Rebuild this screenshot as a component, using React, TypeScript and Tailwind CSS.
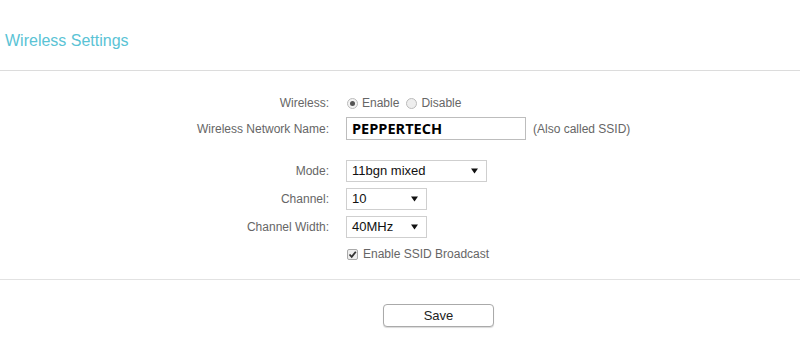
import React from "react";

const Arrow = () => (
  <svg width="7" height="6" viewBox="0 0 7 6" className="shrink-0">
    <path d="M0 0.5 L7 0.5 L3.5 5.5 Z" fill="#111" />
  </svg>
);

function Select({ value, width }: { value: string; width: string }) {
  return (
    <div
      className={`${width} h-[22px] border border-[#cfcfcf] bg-white flex items-center justify-between pl-[5px] pr-[8px] text-[13px] text-[#111]`}
    >
      <span>{value}</span>
      <Arrow />
    </div>
  );
}

function Row({ label, h, children, mt }: { label: string; h: string; children: React.ReactNode; mt: string }) {
  return (
    <div className={`flex items-center ${h} ${mt}`}>
      <div className="w-[329px] text-right text-[12px] text-[#666] pr-0">{label}</div>
      <div className="ml-[17px] flex items-center">{children}</div>
    </div>
  );
}

export default function App() {
  return (
    <div
      className="w-[800px] h-[351px] bg-white overflow-hidden"
      style={{ fontFamily: '"Liberation Sans", Arial, sans-serif' }}
    >
      <div className="h-[71px] border-b border-[#dcdcdc] pl-[5px] pt-[31px]">
        <div className="text-[16px] leading-[20px] text-[#5ac3d5]">Wireless Settings</div>
      </div>
      <div className="h-[209px] border-b border-[#e2e2e2] pt-[21px]">
        <Row label="Wireless:" h="h-[22px]" mt="mt-0">
          <div className="flex items-center text-[12px] text-[#666]">
            <span className="w-[11px] h-[11px] rounded-full border border-[#bbb] bg-[#f3f3f3] flex items-center justify-center ml-[1px]">
              <span className="w-[5px] h-[5px] rounded-full bg-[#555]" />
            </span>
            <span className="ml-[4px]">Enable</span>
            <span className="w-[11px] h-[11px] rounded-full border border-[#bbb] bg-[#eee] ml-[7px]" />
            <span className="ml-[4px]">Disable</span>
          </div>
        </Row>
        <Row label="Wireless Network Name:" h="h-[23px]" mt="mt-[3px]">
          <div className="w-[180px] h-[23px] border border-[#bdbdbd] bg-white flex items-center pl-[5px]">
            <span
              className="text-[14.5px] font-bold text-black"
              style={{ fontFamily: '"Open Sans", sans-serif' }}
            >
              PEPPERTECH
            </span>
          </div>
          <span className="ml-[7px] text-[12px] text-[#666]">(Also called SSID)</span>
        </Row>
        <Row label="Mode:" h="h-[22px]" mt="mt-[20px]">
          <Select value="11bgn mixed" width="w-[141px]" />
        </Row>
        <Row label="Channel:" h="h-[22px]" mt="mt-[6px]">
          <Select value="10" width="w-[81px]" />
        </Row>
        <Row label="Channel Width:" h="h-[22px]" mt="mt-[6px]">
          <Select value="40MHz" width="w-[81px]" />
        </Row>
        <Row label="" h="h-[18px]" mt="mt-[7px]">
          <div className="flex items-center text-[12px] text-[#666]">
            <span className="w-[11px] h-[11px] rounded-[2px] border border-[#aaa] bg-[#eee] flex items-center justify-center ml-[1px]">
              <svg width="9" height="9" viewBox="0 0 9 9">
                <path d="M1.5 4.5 L3.7 6.8 L7.8 1.8" stroke="#333" strokeWidth="1.8" fill="none" />
              </svg>
            </span>
            <span className="ml-[5px]">Enable SSID Broadcast</span>
          </div>
        </Row>
      </div>
      <div className="flex justify-center pt-[24px] pl-[77px]">
        <button className="w-[111px] h-[23px] border border-[#aaa] rounded-[4px] bg-white text-[13px] text-[#222] shadow-[0_1px_1px_rgba(0,0,0,0.15)]">
          Save
        </button>
      </div>
    </div>
  );
}
